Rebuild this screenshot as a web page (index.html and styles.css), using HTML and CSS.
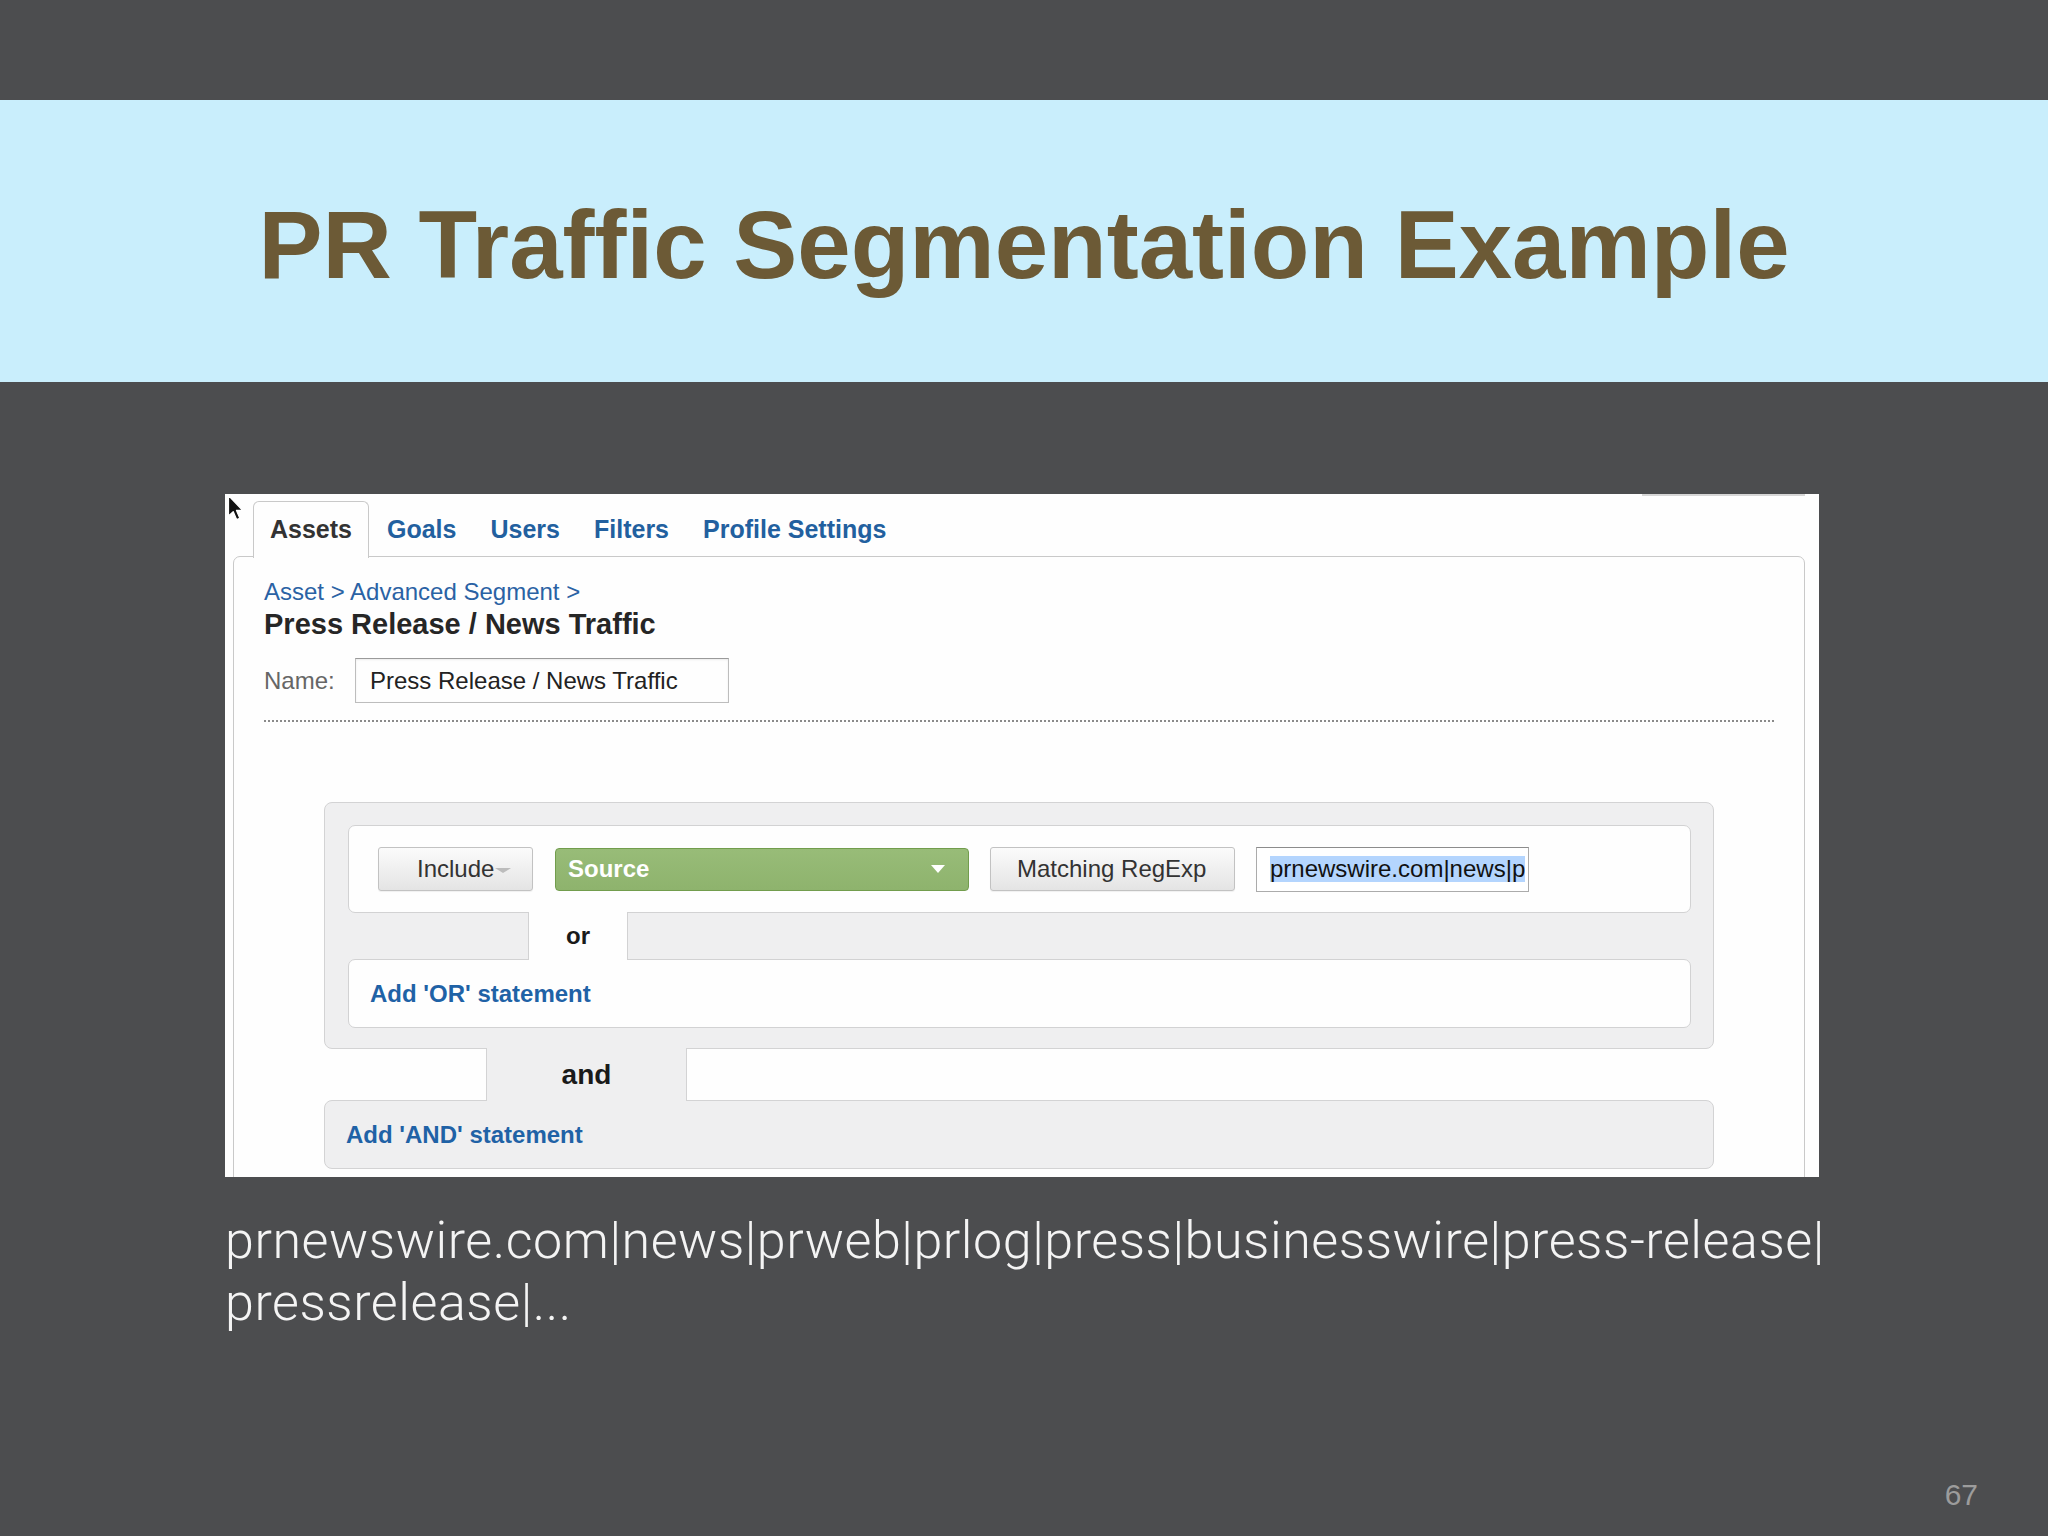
FILE: index.html
```html
<!DOCTYPE html>
<html lang="en">
<head>
<meta charset="utf-8">
<title>PR Traffic Segmentation Example</title>
<link rel="stylesheet" href="styles.css">
</head>
<body>
<div class="slide">
  <header class="band">
    <h1 class="title">PR Traffic Segmentation Example</h1>
  </header>

  <div class="shot">
    <svg class="cursor" width="18" height="28" viewBox="0 0 18 28" aria-hidden="true">
      <path d="M1.5 1.5 L1.5 22 L6.2 17.6 L9.6 25.6 L12.8 24.2 L9.5 16.4 L15.6 16.4 Z" fill="#111" stroke="#fff" stroke-width="1.2" stroke-linejoin="round"/>
    </svg>
    <div class="topstrip"><span class="topbar"></span></div>
    <nav class="tabs">
      <span class="tab active">Assets</span>
      <span class="tab">Goals</span>
      <span class="tab">Users</span>
      <span class="tab">Filters</span>
      <span class="tab">Profile Settings</span>
    </nav>
    <section class="content">
      <div class="crumb">Asset &gt; Advanced Segment &gt;</div>
      <div class="seg-title">Press Release / News Traffic</div>
      <div class="name-row">
        <span class="name-label">Name:</span>
        <div class="name-input">Press Release / News Traffic</div>
      </div>
      <div class="dots"></div>

      <div class="or-group">
        <div class="cond-row">
          <div class="btn include">Include<span class="tri tri-gray"></span></div>
          <div class="source"><span>Source</span><span class="tri tri-white"></span></div>
          <div class="btn match">Matching RegExp</div>
          <div class="val"><span class="sel">prnewswire.com|news|p</span></div>
        </div>
        <div class="link-row or-row"><div class="conn or-conn">or</div></div>
        <div class="add-box">Add 'OR' statement</div>
      </div>

      <div class="link-row and-row"><div class="conn and-conn">and</div></div>
      <div class="and-group">Add 'AND' statement</div>
    </section>
  </div>

  <p class="regex">prnewswire.com|news|prweb|prlog|press|businesswire|press-release|<br>pressrelease|...</p>

  <div class="pagenum">67</div>
</div>
</body>
</html>
```

FILE: styles.css
```css
* { box-sizing: border-box; }

html, body {
  margin: 0;
  padding: 0;
  background: #4c4d4f;
}

.slide {
  width: 2048px;
  height: 1536px;
  display: flex;
  flex-direction: column;
  background: #4c4d4f;
  overflow: hidden;
}

/* ---------- title band ---------- */
.band {
  margin-top: 100px;
  height: 282px;
  background: #c9eefc;
  padding-top: 97px;
}

.title {
  margin: 0;
  font-family: "Liberation Sans", Arial, sans-serif;
  font-weight: 700;
  font-size: 96px;
  line-height: 96px;
  color: #6c5a36;
  text-align: center;
}

/* ---------- screenshot panel ---------- */
.shot {
  position: relative;
  margin: 112px 0 0 225px;
  width: 1594px;
  height: 683px;
  background: #fefefe;
  padding: 0 14px 0 8px;
  overflow: hidden;
  font-family: "Liberation Sans", Arial, sans-serif;
}

.cursor {
  position: absolute;
  left: 2px;
  top: 0;
  z-index: 5;
}

.topstrip {
  height: 2px;
  display: flex;
  justify-content: flex-end;
}

.topbar {
  width: 163px;
  height: 2px;
  background: #d6d6d6;
}

.tabs {
  display: flex;
  align-items: flex-start;
  margin: 5px 0 0 20px;
  height: 56px;
}

.tab {
  position: relative;
  z-index: 1;
  height: 56px;
  padding: 0 16px;
  border: 1px solid transparent;
  border-bottom: 0;
  font-size: 25px;
  font-weight: 700;
  line-height: 55px;
  color: #22609f;
  white-space: nowrap;
}

.tab.active {
  color: #333;
  background: #fefefe;
  border-color: #c9c9c9;
  border-radius: 6px 6px 0 0;
  height: 57px;
  margin-right: 1px;
}

.content {
  position: relative;
  z-index: 0;
  margin-top: -1px;
  border: 1px solid #c9c9c9;
  border-radius: 7px 7px 0 0;
  background: #fefefe;
  padding: 20px 30px 60px 30px;
}

.crumb {
  font-size: 24px;
  line-height: 30px;
  color: #2a62a4;
}

.seg-title {
  font-size: 29px;
  line-height: 34px;
  font-weight: 700;
  color: #262626;
}

.name-row {
  display: flex;
  align-items: center;
  margin-top: 17px;
  height: 45px;
}

.name-label {
  width: 91px;
  font-size: 24px;
  color: #666;
}

.name-input {
  width: 374px;
  height: 45px;
  border: 1px solid #bdbdbd;
  border-top-color: #9a9a9a;
  box-shadow: inset 0 1px 2px rgba(0,0,0,0.08);
  padding-left: 14px;
  font-size: 24px;
  line-height: 43px;
  color: #222;
  white-space: nowrap;
}

.dots {
  margin-top: 17px;
  border-top: 2px dotted #8a8a8a;
}

/* ---------- OR group ---------- */
.or-group {
  margin: 80px 60px 0 60px;
  background: #efeff0;
  border: 1px solid #d3d3d4;
  border-radius: 8px;
  padding: 22px 22px 20px 23px;
}

.cond-row {
  height: 88px;
  display: flex;
  align-items: center;
  gap: 21px;
  padding: 0 29px;
  background: #fefefe;
  border: 1px solid #d2d2d3;
  border-radius: 7px;
}

.btn {
  height: 44px;
  display: flex;
  align-items: center;
  border: 1px solid #c2c2c2;
  border-radius: 3px;
  background: linear-gradient(#fbfbfb, #e4e4e4);
  box-shadow: 0 1px 1px rgba(0,0,0,0.06);
  font-size: 24px;
  color: #333;
  white-space: nowrap;
}

.include {
  width: 155px;
  padding-left: 38px;
}

.match {
  width: 245px;
  padding-left: 26px;
}

.tri {
  display: inline-block;
  width: 0;
  height: 0;
}

.tri-gray {
  margin: 2px 0 0 1px;
  border-left: 8px solid transparent;
  border-right: 8px solid transparent;
  border-top: 5px solid #bcbcbc;
}

.tri-white {
  border-left: 7px solid transparent;
  border-right: 7px solid transparent;
  border-top: 8px solid #fff;
}

.source {
  width: 414px;
  height: 43px;
  margin-left: 1px;
  display: flex;
  align-items: center;
  justify-content: space-between;
  padding: 0 23px 0 12px;
  background: linear-gradient(#98bc78, #8eb36d);
  border: 1px solid #729d4d;
  border-radius: 4px;
  font-size: 24px;
  font-weight: 700;
  color: #fff;
}

.val {
  width: 273px;
  height: 45px;
  display: flex;
  align-items: center;
  padding-left: 13px;
  border: 1px solid #ababab;
  border-top-color: #8c8c8c;
  background: #fff;
  overflow: hidden;
  white-space: nowrap;
}

.sel {
  background: #b4d5fe;
  font-size: 24px;
  line-height: 26px;
  color: #111;
}

.link-row {
  display: flex;
}

.or-row {
  height: 46px;
}

.conn {
  position: relative;
  z-index: 1;
  margin-top: -1px;
  margin-bottom: -1px;
  display: flex;
  align-items: center;
  justify-content: center;
  font-weight: 700;
  color: #1a1a1a;
}

.or-conn {
  margin-left: 180px;
  width: 100px;
  background: #fefefe;
  border-left: 1px solid #d2d2d3;
  border-right: 1px solid #d2d2d3;
  font-size: 24px;
}

.add-box {
  height: 69px;
  padding-left: 21px;
  background: #fefefe;
  border: 1px solid #d2d2d3;
  border-radius: 7px;
  font-size: 24px;
  font-weight: 700;
  line-height: 67px;
  color: #1f62a6;
}

/* ---------- AND ---------- */
.and-row {
  height: 51px;
  margin: 0 60px;
}

.and-conn {
  margin-left: 162px;
  width: 201px;
  background: #efeff0;
  border-left: 1px solid #d3d3d4;
  border-right: 1px solid #d3d3d4;
  font-size: 28px;
}

.and-group {
  margin: 0 60px;
  height: 69px;
  padding-left: 21px;
  background: #efeff0;
  border: 1px solid #d3d3d4;
  border-radius: 8px;
  font-size: 24px;
  font-weight: 700;
  line-height: 67px;
  color: #1f62a6;
}

/* ---------- caption ---------- */
.regex {
  margin: 33px 0 0 0;
  padding-left: 225px;
  font-family: Roboto, "Liberation Sans", sans-serif;
  font-weight: 300;
  font-size: 52px;
  line-height: 62px;
  letter-spacing: 0.55px;
  color: #f4f4f4;
  white-space: nowrap;
}

.pagenum {
  margin-top: auto;
  padding: 0 70px 26px 0;
  text-align: right;
  font-family: "Liberation Sans", Arial, sans-serif;
  font-size: 30px;
  line-height: 30px;
  color: #9c9c9c;
}
```
